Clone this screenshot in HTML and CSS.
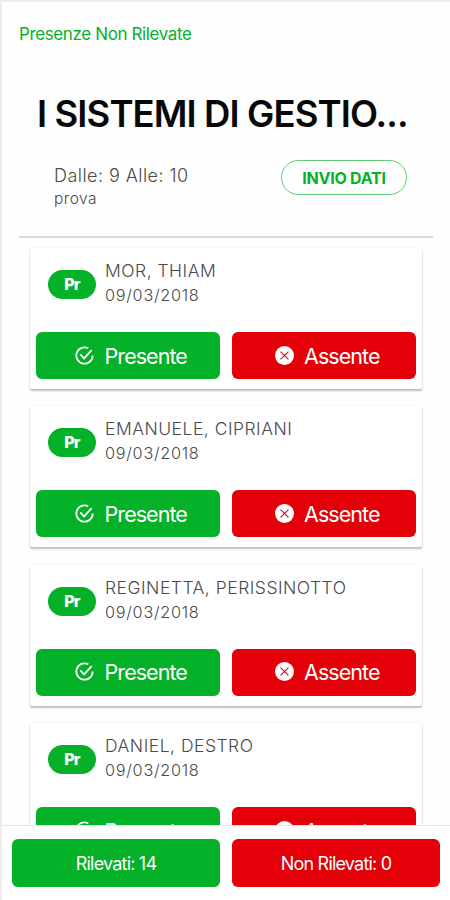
FILE: index.html
```html
<!DOCTYPE html>
<html lang="it">
<head>
<meta charset="utf-8">
<title>Presenze Non Rilevate</title>
<link rel="stylesheet" href="styles.css">
</head>
<body>
<svg class="symbols" aria-hidden="true">
  <symbol id="check" viewBox="0 0 20 20"><path d="M14 2.4A8.6 8.6 0 1 0 18.6 10M5.6 8.8l4 4.2 7.9-8.6" fill="none" stroke="currentColor" stroke-width="1.9"/></symbol>
  <symbol id="cross" viewBox="0 0 20 20"><circle cx="10" cy="10" r="10" fill="currentColor"/><path d="M5.8 5.8l8.4 8.4M14.2 5.8l-8.4 8.4" fill="none" stroke="#e30008" stroke-width="1.1"/></symbol>
</svg>
<div class="screen">
  <header class="topbar"><a class="back">Presenze Non Rilevate</a></header>
  <h1 class="title"><span>I SISTEMI DI GESTIO...</span></h1>
  <section class="lesson">
    <div class="details">
      <p class="time"><span>Dalle: 9 Alle: 10</span></p>
      <p class="note"><span>prova</span></p>
    </div>
    <button class="send"><span>INVIO DATI</span></button>
  </section>
  <main class="list">
    <article class="card">
      <div class="person"><span class="badge">Pr</span><div><p class="name"><span>MOR, THIAM</span></p><p class="date"><span>09/03/2018</span></p></div></div>
      <div class="actions"><button class="btn green"><svg class="icon"><use href="#check"/></svg><span>Presente</span></button><button class="btn red"><svg class="icon"><use href="#cross"/></svg><span>Assente</span></button></div>
    </article>
    <article class="card">
      <div class="person"><span class="badge">Pr</span><div><p class="name"><span>EMANUELE, CIPRIANI</span></p><p class="date"><span>09/03/2018</span></p></div></div>
      <div class="actions"><button class="btn green"><svg class="icon"><use href="#check"/></svg><span>Presente</span></button><button class="btn red"><svg class="icon"><use href="#cross"/></svg><span>Assente</span></button></div>
    </article>
    <article class="card">
      <div class="person"><span class="badge">Pr</span><div><p class="name"><span>REGINETTA, PERISSINOTTO</span></p><p class="date"><span>09/03/2018</span></p></div></div>
      <div class="actions"><button class="btn green"><svg class="icon"><use href="#check"/></svg><span>Presente</span></button><button class="btn red"><svg class="icon"><use href="#cross"/></svg><span>Assente</span></button></div>
    </article>
    <article class="card">
      <div class="person"><span class="badge">Pr</span><div><p class="name"><span>DANIEL, DESTRO</span></p><p class="date"><span>09/03/2018</span></p></div></div>
      <div class="actions"><button class="btn green"><svg class="icon"><use href="#check"/></svg><span>Presente</span></button><button class="btn red"><svg class="icon"><use href="#cross"/></svg><span>Assente</span></button></div>
    </article>
  </main>
  <footer class="totals"><button class="btn green"><span>Rilevati: 14</span></button><button class="btn red"><span>Non Rilevati: 0</span></button></footer>
</div>
</body>
</html>
```
FILE: styles.css
```css
* { box-sizing: border-box; }
body { margin: 0; font-family: Inter, sans-serif; color: #4a4a4a; background: #fefefe; }
p, h1 { margin: 0; font-weight: 300; white-space: nowrap; }
button { font: inherit; padding: 0; border: 0; white-space: nowrap; }
.symbols { display: none; }
.screen { display: flex; flex-direction: column; height: 900px; overflow: hidden; border-top: 2px solid #ececec; border-left: 2px solid #ededed; }
.topbar { height: 64px; flex: none; padding: 20px 0 0 17px; }
.back { display: block; color: #04b129; font-size: 17px; line-height: 24px; letter-spacing: -0.38px; }
.title { flex: none; height: 94px; padding: 26px 0 0 35px; font-size: 36.5px; line-height: 45px; font-weight: 600; letter-spacing: -0.9px; color: #080808; }
.lesson { flex: none; height: 78px; margin: 0 17px 0 17px; border-bottom: 2px solid #dadada; display: flex; justify-content: space-between; }
.details { padding: 4px 0 0 35px; }
.time { font-size: 18px; line-height: 24px; letter-spacing: 0.45px; }
.note { font-size: 15.5px; line-height: 22px; letter-spacing: 0.5px; }
.send { width: 126px; height: 35px; margin-right: 26px; border: 1px solid #5ecb73; border-radius: 18px; background: transparent; color: #04b129; font-size: 16px; font-weight: 700; letter-spacing: -0.25px; }
.list { flex: 1; min-height: 0; overflow: hidden; padding: 10px 28px 0; }
.card { height: 141px; margin-bottom: 17.4px; padding: 0 6px; background: #fff; border-radius: 2px; box-shadow: 0 2px 2px rgba(0,0,0,.24), 0 0 2px rgba(0,0,0,.1); }
.person { display: flex; height: 84px; padding: 10px 0 0 12px; }
.badge { width: 48px; height: 29px; margin: 12px 9px 0 0; border-radius: 15px; background: #04b129; color: #fff; font-size: 16px; line-height: 28px; font-weight: 800; text-align: center; letter-spacing: -0.7px; }
.name { font-size: 17.5px; line-height: 25px; letter-spacing: 0.5px; }
.date { font-size: 16.3px; line-height: 25px; letter-spacing: 0.7px; }
.actions { display: grid; grid-template-columns: 184px 184px; gap: 12px; }
.btn { height: 47px; border-radius: 6px; color: #fff; display: flex; align-items: center; justify-content: center; font-size: 21.5px; letter-spacing: -0.95px; }
.actions .btn { padding-left: 6px; }
.green { background: #04b129; }
.red { background: #e30008; }
.icon { width: 19px; height: 19px; margin: 0 10.5px 1px 0; }
.totals { flex: none; height: 75px; padding: 13px 10px 0; border-top: 1px solid #e6e6e6; display: grid; grid-template-columns: 208px 208px; gap: 12px; background: #fff; }
.totals .btn { height: 48px; font-size: 18px; letter-spacing: -0.8px; }
```
